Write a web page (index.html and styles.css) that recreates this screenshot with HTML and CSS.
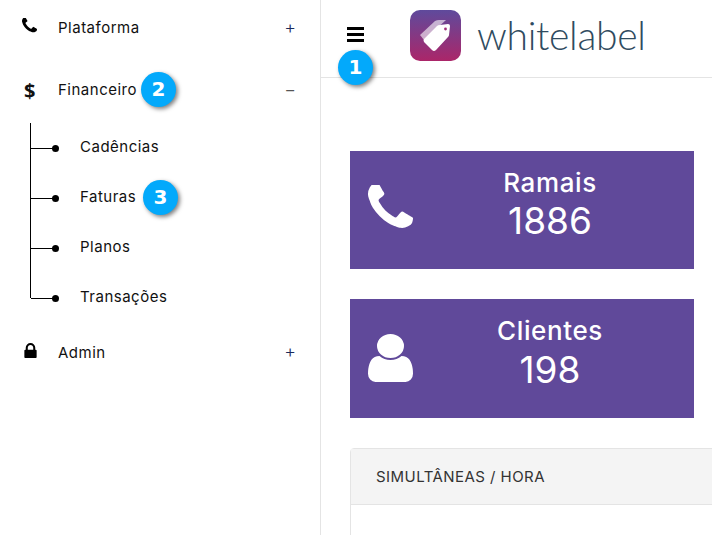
FILE: index.html
```html
<!DOCTYPE html>
<html lang="pt-BR">
<head>
  <meta charset="UTF-8">
  <title>Whitelabel</title>
  <link rel="stylesheet" href="styles.css">
</head>
<body>
  <aside class="sidebar">
    <div class="menu-item menu-item-first">
      <span class="menu-icon">
        <svg class="icon-phone-sm" viewBox="192 192 1408 1408"><path d="M1600 1240q0 27-10 70.500t-21 68.500q-21 50-122 106-94 51-186 51-27 0-53-3.500t-57.500-12.500-47-14.500-55.500-20.500-49-18q-98-35-175-83-127-79-264-216t-216-264q-48-77-83-175-3-9-18-49t-20.500-55.500-14.500-47-12.500-57.500-3.500-53q0-92 51-186 56-101 106-122 25-11 68.500-21t70.500-10q14 0 21 3 18 6 53 76 11 19 30 54t35 63.500 31 53.500q3 4 17.500 25t21.500 35.500 7 28.500q0 20-28.500 50t-62 55-62 53-28.500 46q0 9 5 22.500t8.500 20.500 14 24 11.500 19q76 137 174 235t235 174q2 1 19 11.500t24 14 20.500 8.500 22.500 5q18 0 46-28.500t53-62 55-62 50-28.500q14 0 28.500 7t35.500 21.500 25 17.500q25 15 53.500 31t63.500 35 54 30q70 35 76 53 3 7 3 21z"/></svg>
      </span>
      <span class="menu-label">Plataforma</span>
      <span class="menu-toggle">+</span>
    </div>
    <div class="menu-item">
      <span class="menu-icon menu-dollar">$</span>
      <span class="menu-label">Financeiro</span>
      <span class="menu-toggle menu-toggle-open">−</span>
    </div>
    <ul class="submenu">
      <li>Cadências</li>
      <li>Faturas</li>
      <li>Planos</li>
      <li>Transações</li>
    </ul>
    <div class="menu-item menu-item-last">
      <span class="menu-icon">
        <svg class="icon-lock" viewBox="320 128 1152 1408"><path d="M640 768h512v-192q0-106-75-181t-181-75-181 75-75 181v192zm832 96v576q0 40-28 68t-68 28h-960q-40 0-68-28t-28-68v-576q0-40 28-68t68-28h32v-192q0-184 132-316t316-132 316 132 132 316v192h32q40 0 68 28t28 68z"/></svg>
      </span>
      <span class="menu-label">Admin</span>
      <span class="menu-toggle">+</span>
    </div>
  </aside>

  <main class="main">
    <header class="topbar">
      <div class="hamburger"><span></span><span></span><span></span></div>
      <svg class="logo-mark" viewBox="0 0 51 51">
        <defs>
          <linearGradient id="logoGrad" x1="0" y1="0" x2="0" y2="1">
            <stop offset="0" stop-color="#5f4a9c"/>
            <stop offset="1" stop-color="#ab2669"/>
          </linearGradient>
        </defs>
        <rect width="51" height="51" rx="10" fill="url(#logoGrad)"/>
        <path d="M10 25 L25 11 Q27 10 29 10 L36 10 L14 30 Z" fill="#fff" fill-opacity="0.6"/>
        <path d="M14 29 L27 16 Q28 15 30 15 L38 14 Q40 14 40 16 L39 25 Q39 26 38 27 L26 40 Q24 42 22 40 L14 32 Q13 30 14 29 Z" fill="#fff"/>
        <circle cx="35.500" cy="19" r="1.400" fill="#a0307a"/>
      </svg>
      <span class="wordmark">whitelabel</span>
    </header>

    <section class="content">
      <div class="stat-card">
        <svg class="stat-icon" viewBox="192 192 1408 1408"><path d="M1600 1240q0 27-10 70.500t-21 68.500q-21 50-122 106-94 51-186 51-27 0-53-3.500t-57.500-12.500-47-14.500-55.500-20.500-49-18q-98-35-175-83-127-79-264-216t-216-264q-48-77-83-175-3-9-18-49t-20.500-55.500-14.500-47-12.500-57.500-3.500-53q0-92 51-186 56-101 106-122 25-11 68.500-21t70.500-10q14 0 21 3 18 6 53 76 11 19 30 54t35 63.500 31 53.500q3 4 17.500 25t21.500 35.500 7 28.500q0 20-28.500 50t-62 55-62 53-28.500 46q0 9 5 22.500t8.500 20.500 14 24 11.500 19q76 137 174 235t235 174q2 1 19 11.500t24 14 20.500 8.500 22.500 5q18 0 46-28.500t53-62 55-62 50-28.500q14 0 28.500 7t35.500 21.500 25 17.500q25 15 53.500 31t63.500 35 54 30q70 35 76 53 3 7 3 21z"/></svg>
        <div class="stat-text">
          <div class="stat-title">Ramais</div>
          <div class="stat-value">1886</div>
        </div>
      </div>
      <div class="stat-card stat-card-tall">
        <svg class="stat-icon stat-icon-user" viewBox="256 128 1280 1536" preserveAspectRatio="none"><path d="M1536 1399q0 109-62.500 187t-150.500 78h-854q-88 0-150.500-78t-62.500-187q0-85 8.500-160.500t31.500-152 58.500-131 94-89 134.500-34.500q131 128 313 128t313-128q76 0 134.500 34.500t94 89 58.500 131 31.500 152 8.500 160.500zm-256-887q0 159-112.500 271.500t-271.500 112.500-271.500-112.500-112.500-271.500 112.500-271.500 271.500-112.500 271.500 112.500 112.500 271.500z"/></svg>
        <div class="stat-text">
          <div class="stat-title">Clientes</div>
          <div class="stat-value">198</div>
        </div>
      </div>
      <div class="panel">
        <div class="panel-head">SIMULTÂNEAS / HORA</div>
        <div class="panel-body"></div>
      </div>
    </section>
  </main>

  <!-- marcadores do tutorial -->
  <span class="badge badge-one">1</span>
  <span class="badge badge-two">2</span>
  <span class="badge badge-three">3</span>
</body>
</html>
```

FILE: styles.css
```css
html, body { height: 100%; overflow: hidden; }
body {
  margin: 0;
  display: flex;
  position: relative;
  background: #fff;
  color: #111;
  font-family: "Inter", "Liberation Sans", sans-serif;
}

.sidebar { flex: none; width: 320px; height: 535px; border-right: 1px solid #e4e4e4; }
.menu-item { display: flex; align-items: center; height: 56px; padding: 0 24px 0 22px; }
.menu-item-first { margin-bottom: 6px; }
.menu-item-last .menu-label { margin-top: 1px; }
.menu-icon { flex: none; width: 36px; height: 16px; display: flex; align-items: center; }
.menu-icon svg { display: block; fill: #000; }
.icon-phone-sm { width: 15px; height: 15px; margin-top: -5px; }
.icon-lock { width: 13px; height: 15px; margin-left: 2px; margin-top: -4px; }
.menu-dollar { font-family: "Open Sans", sans-serif; font-weight: 700; font-size: 20px; padding-left: 2px; width: 34px; }
.menu-label { flex: 1; font-size: 15px; letter-spacing: 0.5px; margin-top: -1px; }
.menu-toggle { color: #1b2a5a; font-size: 18px; font-weight: 300; line-height: 1; }
.menu-toggle-open { color: #555; }

.submenu { list-style: none; margin: 3px 0; padding: 0 0 0 80px; position: relative; }
.submenu li { height: 50px; line-height: 52px; font-size: 15px; letter-spacing: 0.5px; position: relative; }
/* tree lines */
.submenu::before { content: ""; position: absolute; left: 30px; top: 2px; bottom: 23px; width: 1px; background: #000; }
.submenu li::before { content: ""; position: absolute; left: -49px; top: 27px; width: 24px; height: 1px; background: #000; }
.submenu li::after { content: ""; position: absolute; left: -28px; top: 24px; width: 7px; height: 7px; border-radius: 50%; background: #000; }

.main { flex: 1; min-width: 0; overflow: hidden; }
.topbar { display: flex; align-items: flex-start; height: 67px; padding: 10px 0 0 26px; border-bottom: 1px solid #e4e4e4; }
.hamburger { flex: none; width: 17px; margin: 17px 46px 0 0; display: flex; flex-direction: column; gap: 3px; }
.hamburger span { display: block; height: 3px; background: #000; }
.logo-mark { flex: none; width: 51px; height: 51px; }
.wordmark { margin-left: 16px; font-family: "Lato", sans-serif; font-weight: 300; font-size: 39px; line-height: 50px; letter-spacing: -0.3px; color: #2f4b60; }

.content { padding: 73px 0 0 29px; }
.stat-card { display: flex; width: 344px; height: 118px; margin-bottom: 30px; padding-left: 18px; box-sizing: border-box; background: #60499a; color: #fff; }
.stat-card-tall { height: 119px; }
.stat-card-tall .stat-value { line-height: 48px; }
.stat-icon { flex: none; width: 45px; height: 45px; margin-top: 34px; fill: #fff; }
.stat-icon-user { height: 48px; width: 45px; margin-top: 35px; }
.stat-text { flex: none; width: 288px; margin-left: -7px; padding-top: 17px; text-align: center; }
.stat-title { font-size: 26px; line-height: 30px; font-weight: 500; letter-spacing: 0.6px; }
.stat-value { font-size: 37px; line-height: 46px; }

.panel { width: 420px; border: 1px solid #e4e4e4; border-radius: 4px 0 0 0; }
.panel-head { height: 56px; line-height: 55px; padding-left: 25px; box-sizing: border-box; background: #f4f4f4; border-bottom: 1px solid #e4e4e4; font-size: 15px; letter-spacing: 0.45px; color: #333; }
.panel-body { height: 60px; }

.badge {
  position: absolute;
  width: 35px;
  height: 35px;
  border-radius: 50%;
  background: #03a9fb;
  color: #fff;
  font-family: "DejaVu Sans", sans-serif;
  font-weight: 700;
  font-size: 20px;
  line-height: 35px;
  text-align: center;
  box-shadow: 2px 2px 4px rgba(0, 0, 0, 0.5);
}
.badge-one { left: 338px; top: 50px; }
.badge-two { left: 141px; top: 72px; }
.badge-three { left: 143px; top: 180px; }
```
